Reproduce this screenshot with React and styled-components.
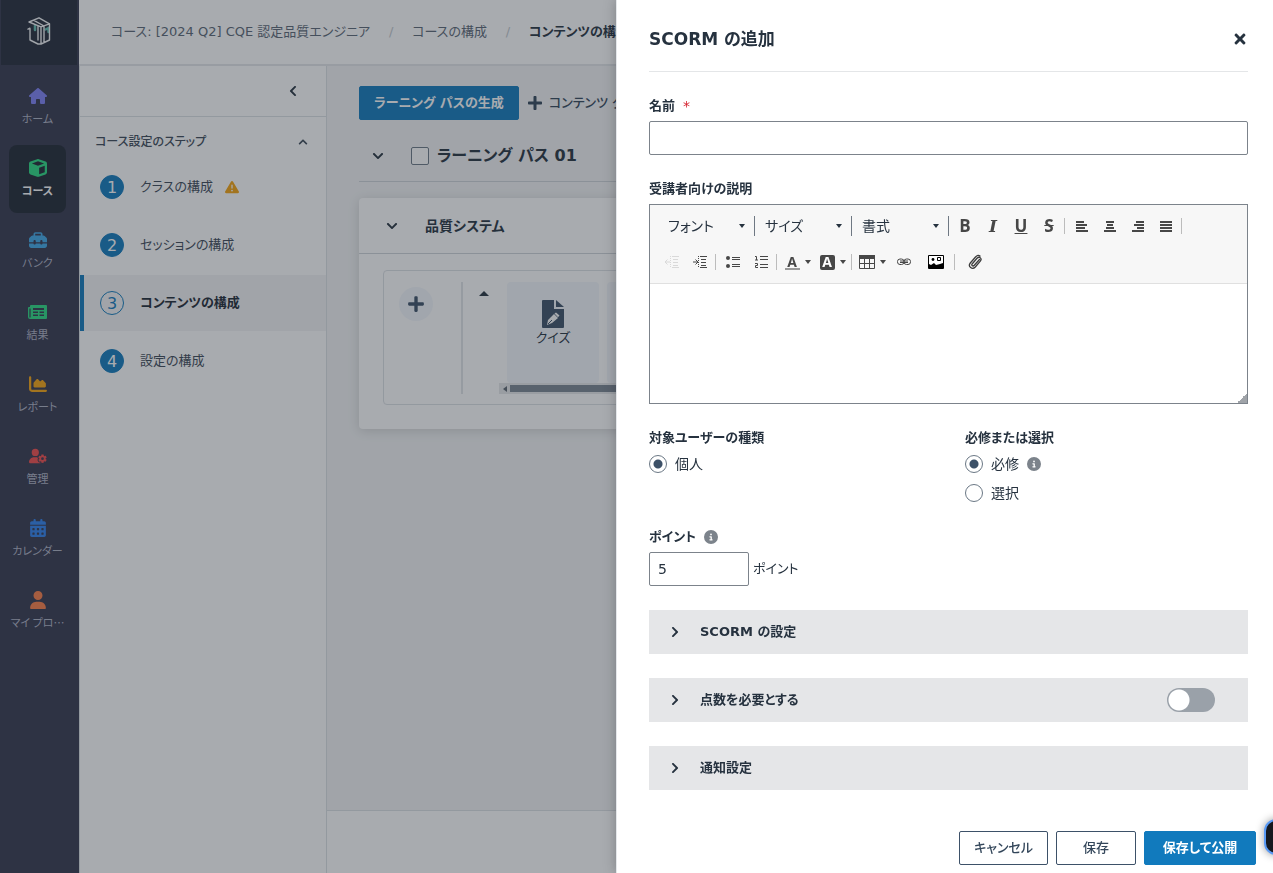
import React, { useState } from "react";
import styled, { createGlobalStyle } from "styled-components";
import {
  FaHouse,
  FaCube,
  FaToolbox,
  FaChartArea,
  FaUserGear,
  FaCalendarDays,
  FaUser,
  FaTriangleExclamation,
  FaCircleInfo,
} from "react-icons/fa6";
import {
  FaChevronLeft,
  FaChevronUp,
  FaChevronDown,
  FaChevronRight,
  FaPlus,
  FaTimes,
} from "react-icons/fa";

const GlobalStyle = createGlobalStyle`
  *, *::before, *::after {
    box-sizing: border-box;
  }
  body {
    margin: 0;
    overflow: hidden;
    color: #26323f;
    font-family: "DejaVu Sans", "Noto Sans CJK JP", sans-serif;
    font-size: 14px;
    line-height: 20px;
    font-feature-settings: "palt";
  }
  button, input, select, textarea {
    color: inherit;
    font: inherit;
    font-feature-settings: inherit;
  }
  a {
    color: inherit;
    text-decoration: none;
  }
`;

const ResultsIcon = () => (
  <svg width="19" height="14" viewBox="0 0 19 14">
    <path
      fill="currentColor"
      fillRule="evenodd"
      d="M3 0h15a1 1 0 0 1 1 1v12a1 1 0 0 1-1 1H2a2 2 0 0 1-2-2V3a1 1 0 0 1 1-1h1V1a1 1 0 0 1 1-1zM1.4 3.4V12a.6.6 0 0 0 1.2 0V3.400zM5 3v2h11V3zM5 6.500V8h5V6.500zM11.500 6.500V8H16V6.500zM5 9.500V11h5V9.500zM11.500 9.500V11H16V9.500z"
    />
  </svg>
);

const QuizIcon = () => (
  <svg width="22" height="28" viewBox="0 0 22 28">
    <path fill="#3d5168" d="M0 1a1 1 0 0 1 1-1h11v9h10v18a1 1 0 0 1-1 1H1a1 1 0 0 1-1-1z" />
    <path fill="#3d5168" d="M14 0l8 7h-8z" />
    <path fill="#fff" d="M5 25l1-5 6-6 4 4-6 5zM12.500 13.500l1.500-1 3.500 3-1.500 1.800z" />
    <path stroke="#3d5168" strokeWidth="1" d="M6 24l4-4" />
  </svg>
);

const LogoIcon = () => (
  <svg width="24" height="28" viewBox="0 0 24 28" fill="none" strokeLinejoin="round" strokeLinecap="round">
    <path stroke="#5fb8ae" strokeWidth="2.500" d="M8 8.500v4.500M18.500 12.500l3-1.500M21.500 11v4" />
    <path
      stroke="#f2f3f5"
      strokeWidth="1.400"
      d="M2 5l10-4.200 10.500 6-8.500 3zM6.500 3.200L17 9M14 9.800V27l8.500-4V6.800M14 27h-3l-8-4V12M1 12.200l2-1M17 9v16.500M11 9v14"
    />
  </svg>
);

const navItems = [
  { label: "ホーム", icon: <FaHouse />, color: "#7d80f5" },
  { label: "コース", icon: <FaCube />, color: "#2bdb83", active: true },
  { label: "バンク", icon: <FaToolbox />, color: "#40a8e8" },
  { label: "結果", icon: <ResultsIcon />, color: "#2bdb83" },
  { label: "レポート", icon: <FaChartArea />, color: "#f5a30f" },
  { label: "管理", icon: <FaUserGear />, color: "#f04b4b" },
  { label: "カレンダー", icon: <FaCalendarDays />, color: "#2f80ed" },
  { label: "マイ プロ…", icon: <FaUser />, color: "#fa7d46" },
];

const steps = [
  { label: "クラスの構成", warning: true },
  { label: "セッションの構成" },
  { label: "コンテンツの構成", active: true },
  { label: "設定の構成" },
];

const Caret = () => (
  <svg width="6" height="4" viewBox="0 0 6 4">
    <path fill="currentColor" d="M0 0h6L3 4z" />
  </svg>
);

const alignLines = {
  左揃え: [0, 8, 0, 11, 0, 9, 0, 12],
  中央揃え: [2, 10, 3, 9, 2, 10, 0, 12],
  右揃え: [4, 12, 2, 12, 5, 12, 0, 12],
  両端揃え: [0, 12, 0, 12, 0, 12, 0, 12],
};

const AlignIcon = ({ name }) => {
  const l = alignLines[name];
  return (
    <svg width="12" height="11" viewBox="0 0 12 11" stroke="#474747" strokeWidth="2">
      {[0, 1, 2, 3].map((i) => (
        <path key={i} d={`M${l[i * 2]} ${i * 3 + 1}H${l[i * 2 + 1]}`} />
      ))}
    </svg>
  );
};

const IndentIcon = ({ out }) => (
  <svg width="14" height="12" viewBox="0 0 14 12" stroke="currentColor" fill="none">
    <path d="M7 .5h7M8 3.500h5M8 6.500h5M8 9.500h5M7 11.500h7" />
    <path strokeDasharray="1 1" d="M5.500 0v12" />
    <path d={out ? "M0 6h5M2.500 3.500L0 6l2.500 2.500" : "M0 6h5M2.500 3.500L5 6 2.500 8.500"} />
  </svg>
);

const BulletsIcon = () => (
  <svg width="14" height="12" viewBox="0 0 14 12">
    <circle cx="2" cy="2" r="2" fill="#474747" />
    <circle cx="2" cy="10" r="2" fill="#474747" />
    <path stroke="#474747" d="M6 1.500h8M6 3.500h8M6 8.500h8M6 10.500h8" />
  </svg>
);

const NumbersIcon = () => (
  <svg width="13" height="14" viewBox="0 0 13 14" stroke="#474747" fill="none">
    <path d="M5 1.500h8M5 4.500h8M5 9.500h8M5 12.500h8" />
    <path d="M0 1.500h1.500V5M0 5h3M0 8.500h2.500v2H.5v2H3" />
  </svg>
);

const TableIcon = () => (
  <svg width="16" height="14" viewBox="0 0 16 14" stroke="#474747" fill="none">
    <path fill="#474747" stroke="none" d="M0 0h16v4H0z" />
    <path d="M.5 1v12.500h15V1M0 8.500h16M5.500 4v9M10.500 4v9" />
  </svg>
);

const LinkIcon = () => (
  <svg width="14" height="8" viewBox="0 0 14 8" fill="none" stroke="#474747">
    <rect x=".5" y="1" width="6.500" height="5.500" rx="2.500" />
    <rect x="7" y="1" width="6.500" height="5.500" rx="2.500" />
    <path d="M3 3h8M3 4.500h8" />
  </svg>
);

const ImageIcon = () => (
  <svg width="16" height="14" viewBox="0 0 16 14">
    <path stroke="#000" fill="#fff" d="M.5.5h15v13H.5z" />
    <path d="M1 13V9l2 1 3-2 2 2 4-1 3-1v5z" />
    <circle cx="5" cy="4.500" r="1.400" />
    <path fill="none" stroke="#000" d="M9.500 2.500h3v3h-3z" />
  </svg>
);

const ClipIcon = () => (
  <svg width="15" height="16" viewBox="0 0 15 16" fill="none" stroke="#3c3c3c" strokeWidth="1.300" strokeLinecap="round">
    <path d="M11.500 5.500l-5.200 5.800c-1.500 1.500-3.300 0-2-1.600L9 4.300c2.500-2.400 5.400.3 3.300 2.900L7.300 13c-3 3.300-7.800-.4-5-4L7.500 3c1.500-1.600 3.300-1.900 4.500-1" />
  </svg>
);

const PathCheck = () => {
  const [checked, setChecked] = useState(false);
  return (
    <PathLabel>
      <SquareCheck type="checkbox" checked={checked} onChange={() => setChecked(!checked)} />
      ラーニング パス 01
    </PathLabel>
  );
};

const Toolbar = () => (
  <ToolbarBox>
    <ToolRow>
      {["フォント", "サイズ", "書式"].map((name) => (
        <Combo key={name}>
          <ComboSelect aria-label={name}>
            <option>{name}</option>
          </ComboSelect>
          <Caret />
        </Combo>
      ))}
      <Gap />
      <ToolButton aria-label="太字"><Letter>B</Letter></ToolButton>
      <ToolButton aria-label="斜体"><Letter $italic>I</Letter></ToolButton>
      <ToolButton aria-label="下線"><Letter $line="underline">U</Letter></ToolButton>
      <ToolButton aria-label="取り消し線"><Letter $line="line-through">S</Letter></ToolButton>
      <Separator />
      {Object.keys(alignLines).map((name) => (
        <ToolButton key={name} aria-label={name}>
          <AlignIcon name={name} />
        </ToolButton>
      ))}
      <Separator />
    </ToolRow>
    <ToolRow>
      <ToolButton aria-label="インデント解除" disabled><IndentIcon out /></ToolButton>
      <ToolButton aria-label="インデント"><IndentIcon /></ToolButton>
      <Separator />
      <ToolButton aria-label="箇条書き"><BulletsIcon /></ToolButton>
      <ToolButton aria-label="番号付きリスト"><NumbersIcon /></ToolButton>
      <Separator />
      <ToolButton $wide aria-label="文字色"><ColorLetter>A</ColorLetter><Caret /></ToolButton>
      <ToolButton $wide aria-label="背景色"><ColorLetter $filled>A</ColorLetter><Caret /></ToolButton>
      <Separator />
      <ToolButton $wide aria-label="表"><TableIcon /><Caret /></ToolButton>
      <ToolButton aria-label="リンク"><LinkIcon /></ToolButton>
      <ToolButton $wide aria-label="画像"><ImageIcon /></ToolButton>
      <Separator />
      <ToolButton $wide aria-label="添付"><ClipIcon /></ToolButton>
    </ToolRow>
  </ToolbarBox>
);

const ScormDrawer = () => {
  const [name, setName] = useState("");
  const [required, setRequired] = useState("必修");
  const [points, setPoints] = useState("5");
  const [needScore, setNeedScore] = useState(false);

  return (
    <Drawer role="dialog" aria-labelledby="drawer-title">
      <DrawerBody>
        <DrawerHead>
          <DrawerTitle id="drawer-title">SCORM の追加</DrawerTitle>
          <CloseButton aria-label="閉じる"><FaTimes /></CloseButton>
        </DrawerHead>

        <Field>
          <FieldLabel htmlFor="name">名前<Star>*</Star></FieldLabel>
          <TextInput id="name" value={name} onChange={(e) => setName(e.target.value)} />
        </Field>

        <Field>
          <FieldLabel htmlFor="description">受講者向けの説明</FieldLabel>
          <Editor>
            <Toolbar />
            <EditorText id="description" />
          </Editor>
        </Field>

        <Columns>
          <RadioGroup>
            <Legend>対象ユーザーの種類</Legend>
            <RadioLabel>
              <Radio type="radio" name="audience" defaultChecked />
              個人
            </RadioLabel>
          </RadioGroup>
          <RadioGroup>
            <Legend>必修または選択</Legend>
            {["必修", "選択"].map((item) => (
              <RadioLabel key={item}>
                <Radio
                  type="radio"
                  name="required"
                  checked={required === item}
                  onChange={() => setRequired(item)}
                />
                {item}
                {item === "必修" && <InfoIcon />}
              </RadioLabel>
            ))}
          </RadioGroup>
        </Columns>

        <Field>
          <FieldLabel htmlFor="points">ポイント<InfoIcon /></FieldLabel>
          <PointsRow>
            <PointsInput id="points" value={points} onChange={(e) => setPoints(e.target.value)} />
            <span>ポイント</span>
          </PointsRow>
        </Field>

        <Sections>
          <Section>
            <SectionButton><FaChevronRight />SCORM の設定</SectionButton>
          </Section>
          <Section>
            <SectionButton><FaChevronRight />点数を必要とする</SectionButton>
            <Switch
              type="checkbox"
              role="switch"
              aria-label="点数を必要とする"
              checked={needScore}
              onChange={() => setNeedScore(!needScore)}
            />
          </Section>
          <Section>
            <SectionButton><FaChevronRight />通知設定</SectionButton>
          </Section>
        </Sections>
      </DrawerBody>
      <DrawerFoot>
        <Button>キャンセル</Button>
        <Button $minWidth="80px">保存</Button>
        <Button $primary $minWidth="112px">保存して公開</Button>
      </DrawerFoot>
    </Drawer>
  );
};

const App = () => {
  return (
    <>
      <GlobalStyle />
      <Page lang="ja">
        <SideNav>
          <LogoBox><LogoIcon /></LogoBox>
          <NavList>
            {navItems.map((item) => (
              <NavLink key={item.label} href="#" $active={item.active}>
                <NavIcon $color={item.color}>{item.icon}</NavIcon>
                {item.label}
              </NavLink>
            ))}
          </NavList>
        </SideNav>

        <Shell>
          <Header>
            <Crumb href="#">コース: [2024 Q2] CQE 認定品質エンジニア</Crumb>
            <Slash>/</Slash>
            <Crumb href="#">コースの構成</Crumb>
            <Slash>/</Slash>
            <Current>コンテンツの構成</Current>
          </Header>

          <Work>
            <StepPanel>
              <CollapseRow>
                <PlainButton aria-label="折りたたむ"><FaChevronLeft /></PlainButton>
              </CollapseRow>
              <StepHead>
                コース設定のステップ
                <FaChevronUp />
              </StepHead>
              <StepList>
                {steps.map((step, index) => (
                  <StepLink key={step.label} href="#" $active={step.active}>
                    <StepNumber $active={step.active}>{index + 1}</StepNumber>
                    {step.label}
                    {step.warning && <FaTriangleExclamation />}
                  </StepLink>
                ))}
              </StepList>
            </StepPanel>

            <Main>
              <Content>
                <ActionRow>
                  <Button $primary>ラーニング パスの生成</Button>
                  <AddButton><FaPlus />コンテンツ グ</AddButton>
                </ActionRow>
                <PathRow>
                  <PlainButton aria-label="開閉"><FaChevronDown /></PlainButton>
                  <PathCheck />
                </PathRow>
                <Card>
                  <CardHead>
                    <PlainButton aria-label="開閉"><FaChevronDown /></PlainButton>
                    <CardTitle>品質システム</CardTitle>
                  </CardHead>
                  <TileBox>
                    <RoundButton aria-label="追加"><FaPlus /></RoundButton>
                    <Divider />
                    <UpMark viewBox="0 0 10 5"><path fill="currentColor" d="M0 5l5-5 5 5z" /></UpMark>
                    <TileScroller>
                      <Tiles>
                        <Tile><QuizIcon />クイズ</Tile>
                        <Tile />
                      </Tiles>
                      <ScrollBar>
                        <svg width="4" height="6" viewBox="0 0 4 6"><path fill="#5d6670" d="M4 0v6L0 3z" /></svg>
                        <ScrollThumb />
                      </ScrollBar>
                    </TileScroller>
                  </TileBox>
                </Card>
              </Content>
              <MainFoot />
            </Main>
          </Work>
        </Shell>
      </Page>
      <Backdrop />
      <ScormDrawer />
      <ChatButton aria-label="チャット" />
    </>
  );
};

export default App;

const Page = styled.div`
  display: flex;
  min-height: 100vh;
  background: #fff;
`;

const SideNav = styled.nav`
  width: 79px;
  flex-shrink: 0;
  background: #35374e;
`;

const LogoBox = styled.div`
  display: flex;
  align-items: center;
  justify-content: center;
  height: 65px;
  margin: 0 2px 8px 1px;
  padding-bottom: 3px;
  background: #242b39;
`;

const NavList = styled.div`
  display: flex;
  flex-direction: column;
  gap: 4px;
  padding: 0 13px 0 9px;
`;

const NavLink = styled.a`
  display: flex;
  flex-direction: column;
  align-items: center;
  height: 68px;
  padding-top: 13px;
  border-radius: 8px;
  background: ${(props) => (props.$active ? "#1f2733" : "transparent")};
  color: ${(props) => (props.$active ? "#fff" : "#aeb2c4")};
  font-family: "Noto Sans CJK JP", sans-serif;
  font-size: 11px;
  font-weight: ${(props) => (props.$active ? 700 : 400)};
  line-height: 20px;
  white-space: nowrap;
`;

const NavIcon = styled.span`
  display: flex;
  align-items: center;
  height: 20px;
  margin-bottom: 2px;
  color: ${(props) => props.$color};
  font-size: 18px;
`;

const Shell = styled.div`
  display: flex;
  flex: 1;
  flex-direction: column;
  min-width: 0;
`;

const Header = styled.header`
  display: flex;
  align-items: center;
  height: 66px;
  padding: 0 32px;
  border-bottom: 2px solid #e4e7ea;
  font-size: 13px;
  white-space: nowrap;
`;

const Crumb = styled.a`
  color: #5b6775;
`;

const Current = styled.span`
  font-weight: 700;
`;

const Slash = styled.span`
  width: 42px;
  color: #c2c8ce;
  text-align: center;
`;

const Work = styled.div`
  display: flex;
  flex: 1;
`;

const StepPanel = styled.aside`
  width: 248px;
  flex-shrink: 0;
  border: solid #dde1e5;
  border-width: 0 1px;
`;

const CollapseRow = styled.div`
  display: flex;
  align-items: center;
  justify-content: flex-end;
  height: 51px;
  padding-right: 25px;
  border-bottom: 1px solid #dde1e5;
`;

const PlainButton = styled.button`
  display: flex;
  align-items: center;
  justify-content: center;
  width: 16px;
  height: 16px;
  padding: 0;
  border: 0;
  background: none;
  font-size: 12px;
`;

const StepHead = styled.div`
  display: flex;
  align-items: center;
  justify-content: space-between;
  height: 42px;
  padding: 8px 18px 0 15px;
  color: #3c4957;
  font-size: 12px;
  font-weight: 500;
  svg {
    font-size: 10px;
  }
`;

const StepList = styled.div`
  display: flex;
  flex-direction: column;
  gap: 2px;
`;

const StepLink = styled.a`
  display: flex;
  align-items: center;
  height: 56px;
  padding-left: 16px;
  border-left: 4px solid ${(props) => (props.$active ? "#117abd" : "transparent")};
  background: ${(props) => (props.$active ? "#f3f4f5" : "transparent")};
  color: ${(props) => (props.$active ? "#1d2935" : "#3c4957")};
  font-size: 13px;
  font-weight: ${(props) => (props.$active ? 700 : 400)};
  svg {
    margin-left: 12px;
    color: #f5a30f;
    font-size: 14px;
  }
`;

const StepNumber = styled.span`
  width: 24px;
  height: 24px;
  margin-right: 16px;
  border: 1px solid #117abd;
  border-radius: 50%;
  background: ${(props) => (props.$active ? "transparent" : "#117abd")};
  color: ${(props) => (props.$active ? "#117abd" : "#fff")};
  font-size: 16px;
  font-weight: 400;
  line-height: 23px;
  text-align: center;
`;

const Main = styled.main`
  display: flex;
  flex: 1;
  flex-direction: column;
  min-width: 0;
  background: #f3f4f5;
`;

const Content = styled.div`
  flex: 1;
  padding: 20px 32px;
`;

const MainFoot = styled.div`
  height: 63px;
  border-top: 1px solid #dde1e5;
  background: #fff;
`;

const ActionRow = styled.div`
  display: flex;
  align-items: center;
  gap: 8px;
`;

const Button = styled.button`
  min-width: ${(props) => props.$minWidth || "0"};
  height: 34px;
  padding: 0 14px;
  border: 1px solid ${(props) => (props.$primary ? "#117abd" : "#3d5168")};
  border-radius: 2px;
  background: ${(props) => (props.$primary ? "#117abd" : "#fff")};
  color: ${(props) => (props.$primary ? "#fff" : "#33465a")};
  font-size: 13px;
  font-weight: ${(props) => (props.$primary ? 700 : 500)};
  white-space: nowrap;
`;

const AddButton = styled.button`
  display: flex;
  align-items: center;
  gap: 6px;
  padding: 0;
  border: 0;
  background: none;
  color: #33465a;
  font-size: 13px;
  font-weight: 500;
  white-space: nowrap;
  svg {
    font-size: 16px;
  }
`;

const PathRow = styled.div`
  display: flex;
  align-items: center;
  gap: 25px;
  height: 62px;
  margin-bottom: 16px;
  padding: 11px 0 0 11px;
  border-bottom: 1px solid #cfd4d9;
`;

const PathLabel = styled.label`
  display: flex;
  align-items: center;
  gap: 8px;
  font-size: 16px;
  font-weight: 700;
`;

const SquareCheck = styled.input`
  appearance: none;
  width: 18px;
  height: 18px;
  margin: 0;
  border: 1px solid #6b7885;
  border-radius: 2px;
  background: #fff;
  &:checked {
    background: #117abd;
  }
`;

const Card = styled.section`
  padding-bottom: 24px;
  border-radius: 4px;
  background: #fff;
  box-shadow: 0 2px 12px rgba(0, 0, 0, 0.14);
`;

const CardHead = styled.div`
  display: flex;
  align-items: center;
  gap: 25px;
  height: 56px;
  margin-bottom: 16px;
  padding-left: 25px;
  border-bottom: 1px solid #cfd4d9;
`;

const CardTitle = styled.h2`
  margin: 0;
  font-size: 14px;
`;

const TileBox = styled.div`
  display: flex;
  height: 135px;
  margin: 0 24px;
  padding: 11px 15px 10px;
  border: 1px solid #dde1e5;
  border-radius: 4px;
`;

const RoundButton = styled.button`
  display: flex;
  align-items: center;
  justify-content: center;
  width: 34px;
  height: 34px;
  margin: 5px 28px 0 0;
  padding: 0;
  flex-shrink: 0;
  border: 0;
  border-radius: 50%;
  background: #f4f7fc;
  color: #3d5168;
  font-size: 18px;
`;

const Divider = styled.div`
  width: 2px;
  flex-shrink: 0;
  background: #e2e5e8;
`;

const UpMark = styled.svg`
  width: 10px;
  height: 5px;
  flex-shrink: 0;
  margin: 9px 10px 0 16px;
`;

const TileScroller = styled.div`
  flex: 1;
  min-width: 0;
  overflow: hidden;
`;

const Tiles = styled.div`
  display: flex;
  gap: 8px;
  padding-left: 8px;
`;

const Tile = styled.div`
  display: flex;
  flex-direction: column;
  align-items: center;
  width: 92px;
  height: 101px;
  padding-top: 18px;
  border-radius: 4px;
  background: #f4f7fc;
  font-size: 13px;
`;

const ScrollBar = styled.div`
  display: flex;
  align-items: center;
  gap: 3px;
  height: 11px;
  padding-left: 4px;
  background: #e6e8ea;
`;

const ScrollThumb = styled.div`
  flex: 1;
  height: 7px;
  background: #7a8591;
`;

const Backdrop = styled.div`
  position: fixed;
  inset: 0;
  background: rgba(37, 45, 55, 0.4);
`;

const Drawer = styled.section`
  position: fixed;
  top: 0;
  right: 0;
  bottom: 0;
  display: flex;
  flex-direction: column;
  width: 657px;
  max-width: 100%;
  border-left: 1px solid #e4e7ea;
  background: #fff;
  box-shadow: 0 0 12px rgba(0, 0, 0, 0.25);
`;

const DrawerBody = styled.div`
  flex: 1;
  min-height: 0;
  padding: 0 25px 0 32px;
  overflow: auto;
`;

const DrawerHead = styled.div`
  display: flex;
  align-items: center;
  justify-content: space-between;
  height: 72px;
  margin-bottom: 24px;
  padding-top: 6px;
  border-bottom: 1px solid #e4e6e8;
`;

const DrawerTitle = styled.h1`
  margin: 0;
  font-size: 17px;
  line-height: 24px;
`;

const CloseButton = styled.button`
  display: flex;
  padding: 0;
  border: 0;
  background: none;
  font-size: 16px;
`;

const Field = styled.div`
  margin-bottom: 24px;
`;

const FieldLabel = styled.label`
  display: flex;
  align-items: center;
  gap: 8px;
  height: 20px;
  margin-bottom: 5px;
  font-size: 13px;
  font-weight: 700;
`;

const Star = styled.span`
  color: #d5212e;
  font-size: 14px;
  font-weight: 400;
`;

const TextInput = styled.input`
  display: block;
  width: 100%;
  height: 34px;
  padding: 0 8px;
  border: 1px solid #7c838b;
  border-radius: 2px;
`;

const Editor = styled.div`
  border: 1px solid #7c838b;
`;

const ToolbarBox = styled.div`
  padding: 3px 8px;
  border-bottom: 1px solid #e0e0e0;
  background: #f7f7f7;
`;

const ToolRow = styled.div`
  display: flex;
  align-items: center;
  height: 36px;
`;

const Combo = styled.div`
  display: flex;
  align-items: center;
  width: 97px;
  height: 20px;
  padding-right: 9px;
  border-right: 1px solid #6f7883;
`;

const ComboSelect = styled.select`
  appearance: none;
  flex: 1;
  min-width: 0;
  padding: 0 0 0 10px;
  border: 0;
  background: none;
`;

const Gap = styled.span`
  width: 2px;
`;

const ToolButton = styled.button`
  display: flex;
  align-items: center;
  justify-content: center;
  gap: 5px;
  width: ${(props) => (props.$wide ? "35px" : "28px")};
  height: 28px;
  padding: 0;
  border: 0;
  background: none;
  color: #474747;
  &:disabled {
    color: #d9d9d9;
  }
`;

const Letter = styled.span`
  font-family: ${(props) => (props.$italic ? '"DejaVu Serif", serif' : '"Open Sans", sans-serif')};
  font-size: 17px;
  font-style: ${(props) => (props.$italic ? "italic" : "normal")};
  font-weight: 700;
  text-decoration: ${(props) => props.$line || "none"};
`;

const ColorLetter = styled.span`
  width: 15px;
  height: 15px;
  border-bottom: ${(props) => (props.$filled ? "0" : "2px solid #999")};
  border-radius: ${(props) => (props.$filled ? "2px" : "0")};
  background: ${(props) => (props.$filled ? "#474747" : "none")};
  color: ${(props) => (props.$filled ? "#fff" : "#474747")};
  font-family: "Open Sans", sans-serif;
  font-size: 14px;
  font-weight: 700;
  line-height: 14px;
  text-align: center;
`;

const Separator = styled.span`
  width: 1px;
  height: 16px;
  margin: 0 3px 0 1px;
  background: #bcbcbc;
`;

const EditorText = styled.textarea`
  display: block;
  width: 100%;
  height: 119px;
  padding: 8px;
  border: 0;
  outline: 0;
  resize: none;
  background: linear-gradient(135deg, transparent 50%, #a0a4a9 50%) right bottom / 10px 10px no-repeat;
`;

const Columns = styled.div`
  display: grid;
  grid-template-columns: 316px 1fr;
  min-height: 99px;
`;

const RadioGroup = styled.fieldset`
  min-width: 0;
  margin: 0;
  padding: 0;
  border: 0;
`;

const Legend = styled.legend`
  padding: 0;
  font-size: 13px;
  font-weight: 700;
`;

const RadioLabel = styled.label`
  display: flex;
  align-items: center;
  gap: 8px;
  height: 20px;
  margin: 6px 0 9px;
`;

const Radio = styled.input`
  appearance: none;
  width: 18px;
  height: 18px;
  margin: 0;
  border: 1px solid #6b7885;
  border-radius: 50%;
  background: #fff;
  &:checked {
    background: radial-gradient(circle, #3d5168 4px, #fff 5px);
  }
`;

const InfoIcon = styled(FaCircleInfo)`
  color: #7c838b;
  font-size: 14px;
`;

const PointsRow = styled.div`
  display: flex;
  align-items: center;
  gap: 4px;
  font-size: 13px;
`;

const PointsInput = styled(TextInput)`
  width: 100px;
  font-size: 14px;
`;

const Sections = styled.div`
  display: flex;
  flex-direction: column;
  gap: 24px;
`;

const Section = styled.div`
  display: flex;
  align-items: center;
  height: 44px;
  padding-right: 33px;
  background: #e5e6e8;
`;

const SectionButton = styled.button`
  display: flex;
  flex: 1;
  align-items: center;
  gap: 19px;
  height: 44px;
  padding: 0 0 0 20px;
  border: 0;
  background: none;
  font-size: 13px;
  font-weight: 700;
  svg {
    font-size: 12px;
  }
`;

const Switch = styled.input`
  appearance: none;
  width: 48px;
  height: 24px;
  margin: 0;
  border-radius: 12px;
  background: radial-gradient(circle at 12px 12px, #fff 10px, #9aa1a9 11px);
  &:checked {
    background: radial-gradient(circle at 36px 12px, #fff 10px, #117abd 11px);
  }
`;

const DrawerFoot = styled.div`
  display: flex;
  justify-content: flex-end;
  gap: 8px;
  padding: 8px 17px;
`;

const ChatButton = styled.button`
  position: fixed;
  right: -27px;
  bottom: 18px;
  width: 36px;
  height: 36px;
  padding: 0;
  border: 2px solid #5b9bf5;
  border-radius: 12px;
  background: #16191f;
  box-shadow: 0 0 8px rgba(0, 0, 0, 0.4);
`;
